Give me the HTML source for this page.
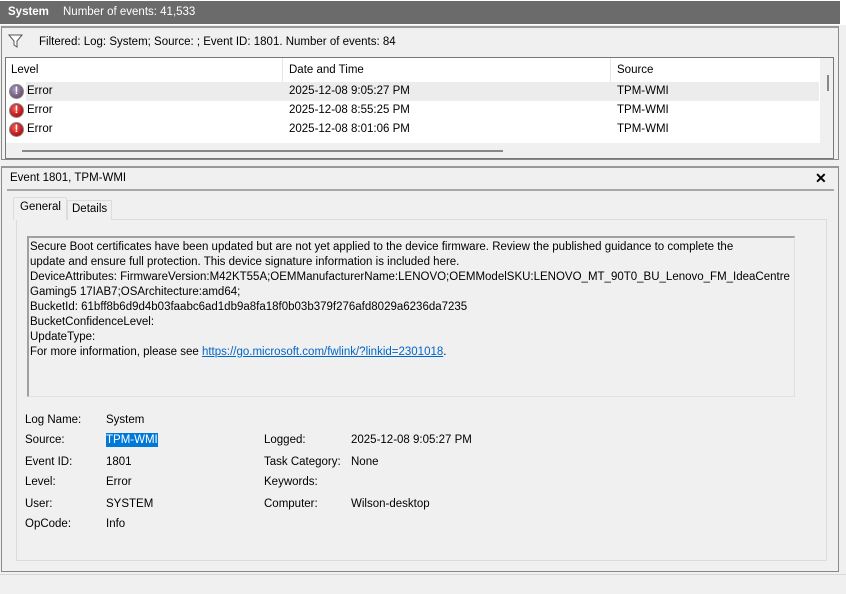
<!DOCTYPE html>
<html><head><meta charset="utf-8"><style>
*{margin:0;padding:0;box-sizing:border-box}
body{width:846px;height:594px;background:#f0f0f0;font-family:"Liberation Sans",Arial,sans-serif;font-size:11.5px;color:#000;position:relative;overflow:hidden}
.a{position:absolute;white-space:nowrap}
.ic{position:absolute;width:15px;height:15px;border-radius:50%;background:radial-gradient(circle at 40% 35%,#f06060,#c01818 60%,#901010);border:1px solid #888;color:#fff;font-weight:bold;font-size:11px;line-height:13px;text-align:center}
.lnk{color:#0066cc;text-decoration:underline}
</style></head><body>
<div class="a" style="left:0;top:0;width:846px;height:25px;background:#fff"></div>
<div class="a" style="left:0;top:1px;width:840px;height:23px;background:#6b6b6b"></div>
<div class="a" style="left:8px;top:6px;color:#fff;font-weight:bold">System</div>
<div class="a" style="left:63px;top:6px;color:#fff">Number of events: 41,533</div>
<div class="a" style="left:1px;top:26px;width:838px;height:134px;border:1px solid #888;border-top:2px solid #999;background:#f0f0f0"></div>
<svg class="a" style="left:8px;top:34px" width="15" height="14"><path d="M1 1h13l-5 6v6l-3-2v-4z" fill="#fff" stroke="#555"/></svg>
<div class="a" style="left:39px;top:36px">Filtered: Log: System; Source: ; Event ID: 1801. Number of events: 84</div>
<div class="a" style="left:5px;top:57px;width:829px;height:102px;border:1px solid #777;background:#f0f0f0"></div>
<div class="a" style="left:6px;top:58px;width:814px;height:85px;background:#fff"></div>
<div class="a" style="left:282px;top:58px;width:1px;height:24px;background:#e5e5e5"></div>
<div class="a" style="left:610px;top:58px;width:1px;height:24px;background:#e5e5e5"></div>
<div class="a" style="left:11px;top:64px">Level</div>
<div class="a" style="left:289px;top:64px">Date and Time</div>
<div class="a" style="left:617px;top:64px">Source</div>
<div class="a" style="left:26px;top:82px;width:793px;height:19px;background:#ececec"></div>
<div class="ic" style="left:9px;top:84px;background:radial-gradient(circle at 40% 35%,#a0a0c8,#7a5a7a 60%,#604060)">!</div>
<div class="ic" style="left:9px;top:103px">!</div>
<div class="ic" style="left:9px;top:122px">!</div>
<div class="a" style="left:27px;top:85px">Error</div><div class="a" style="left:289px;top:85px">2025-12-08 9:05:27 PM</div><div class="a" style="left:617px;top:85px">TPM-WMI</div>
<div class="a" style="left:27px;top:104px">Error</div><div class="a" style="left:289px;top:104px">2025-12-08 8:55:25 PM</div><div class="a" style="left:617px;top:104px">TPM-WMI</div>
<div class="a" style="left:27px;top:123px">Error</div><div class="a" style="left:289px;top:123px">2025-12-08 8:01:06 PM</div><div class="a" style="left:617px;top:123px">TPM-WMI</div>
<div class="a" style="left:827px;top:75px;width:2px;height:16px;background:#888"></div>
<div class="a" style="left:22px;top:150px;width:481px;height:2px;background:#888"></div>
<div class="a" style="left:1px;top:166px;width:838px;height:406px;border:1px solid #888;border-top:2px solid #999;background:#f0f0f0"></div>
<div class="a" style="left:10px;top:172px">Event 1801, TPM-WMI</div>
<div class="a" style="left:815px;top:170px;font-weight:bold;font-size:14px">✕</div>
<div class="a" style="left:7px;top:189px;width:827px;height:2px;background:#a8a8a8"></div>
<div class="a" style="left:16px;top:219px;width:811px;height:342px;border:1px solid #dcdcdc;background:#f0f0f0"></div>
<div class="a" style="left:13px;top:197px;width:54px;height:23px;border:1px solid #dcdcdc;border-bottom:none;background:#f0f0f0"></div>
<div class="a" style="left:20px;top:201px">General</div>
<div class="a" style="left:67px;top:200px;width:45px;height:20px;border:1px solid #dcdcdc;border-bottom:none;background:#f0f0f0"></div>
<div class="a" style="left:72px;top:203px">Details</div>
<div class="a" style="left:27px;top:236px;width:768px;height:161px;border-top:2px solid #a0a0a0;border-left:2px solid #a0a0a0;border-right:1px solid #e0e0e0;border-bottom:1px solid #e0e0e0"></div>
<div class="a" style="left:30px;top:240px;line-height:15px">Secure Boot certificates have been updated but are not yet applied to the device firmware. Review the published guidance to complete the<br>update and ensure full protection. This device signature information is included here.<br>DeviceAttributes: FirmwareVersion:M42KT55A;OEMManufacturerName:LENOVO;OEMModelSKU:LENOVO_MT_90T0_BU_Lenovo_FM_IdeaCentre<br>Gaming5 17IAB7;OSArchitecture:amd64;<br>BucketId: 61bff8b6d9d4b03faabc6ad1db9a8fa18f0b03b379f276afd8029a6236da7235<br>BucketConfidenceLevel:<br>UpdateType:<br>For more information, please see <span class="lnk">https://go.microsoft.com/fwlink/?linkid=2301018</span>.</div>
<div class="a" style="left:25px;top:414px">Log Name:</div><div class="a" style="left:106px;top:414px">System</div>
<div class="a" style="left:25px;top:434px">Source:</div><div class="a" style="left:106px;top:433px;background:#0078d7;color:#fff;padding:1px 0">TPM-WMI</div>
<div class="a" style="left:264px;top:434px">Logged:</div><div class="a" style="left:351px;top:434px">2025-12-08 9:05:27 PM</div>
<div class="a" style="left:25px;top:456px">Event ID:</div><div class="a" style="left:106px;top:456px">1801</div>
<div class="a" style="left:264px;top:456px">Task Category:</div><div class="a" style="left:351px;top:456px">None</div>
<div class="a" style="left:25px;top:476px">Level:</div><div class="a" style="left:106px;top:476px">Error</div>
<div class="a" style="left:264px;top:476px">Keywords:</div>
<div class="a" style="left:25px;top:498px">User:</div><div class="a" style="left:106px;top:498px">SYSTEM</div>
<div class="a" style="left:264px;top:498px">Computer:</div><div class="a" style="left:351px;top:498px">Wilson-desktop</div>
<div class="a" style="left:25px;top:518px">OpCode:</div><div class="a" style="left:106px;top:518px">Info</div>
<div class="a" style="left:0;top:574px;width:846px;height:1px;background:#d8d8d8"></div>
</body></html>
